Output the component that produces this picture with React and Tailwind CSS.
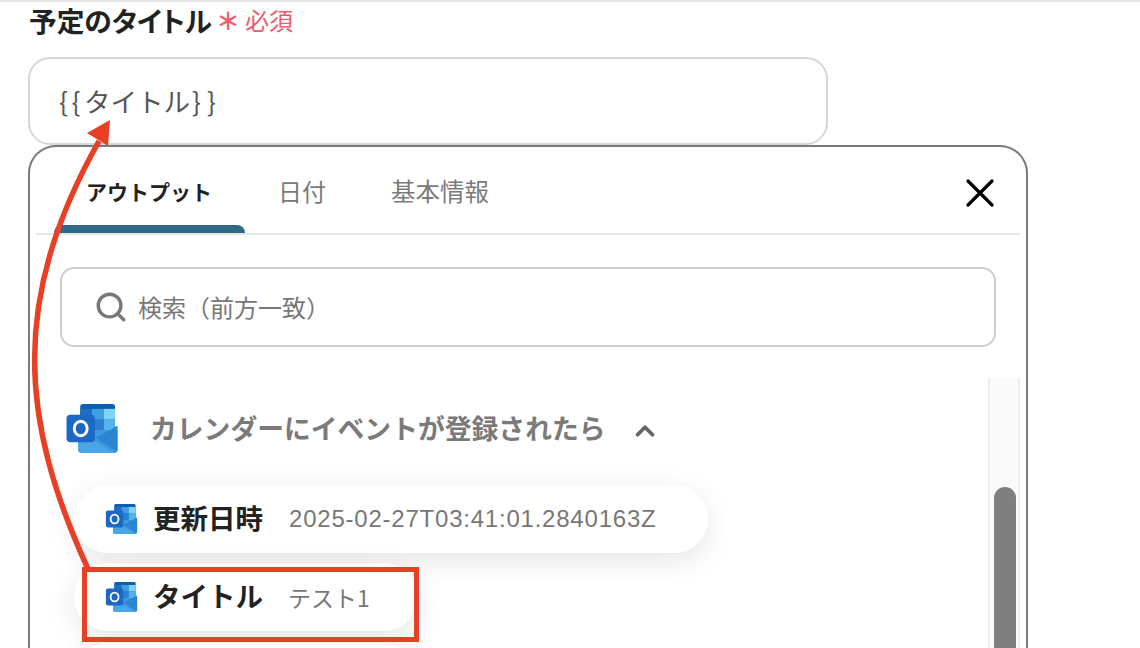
import { Search, ChevronUp, X } from 'lucide-react'

const jpFont = "font-['Noto_Sans_CJK_JP','Noto_Sans',sans-serif]"

function OutlookIcon({ className }) {
  return (
    <svg viewBox="0 0 52 50" className={className}>
      <path d="M14 2.5C14 1.1 15.1 0 16.5 0H47c1.4 0 2.5 1.1 2.5 2.5V26H14z" fill="#0f5fb0" />
      <rect x="14" y="5" width="12" height="11" fill="#1f6fc4" />
      <rect x="26" y="5" width="12" height="11" fill="#3f9fe3" />
      <rect x="38" y="5" width="11.5" height="11" fill="#7fd3f7" />
      <rect x="14" y="16" width="12" height="11" fill="#1a68bd" />
      <rect x="26" y="16" width="12" height="11" fill="#2c7fd3" />
      <rect x="38" y="16" width="11.5" height="11" fill="#52b4ea" />
      <rect x="26" y="27" width="12" height="11" fill="#1a68bd" />
      <path d="M12 26.5 L52 26.5 V47 C52 48.7 50.7 50 49 50 H15 C13.3 50 12 48.7 12 47 Z" fill="#3d97dd" />
      <path d="M30 35 L52 22 V47 C52 47.6 51.9 48 51.6 48.5 Z" fill="#2b85d0" />
      <path d="M12 28 L49.5 50 H15 C13.3 50 12 48.7 12 47 Z" fill="#4aa6e6" />
      <path d="M0 14.5C0 12.6 1.6 11 3.5 11H25.5C27.4 11 29 12.6 29 14.5V35.5C29 37.4 27.4 39 25.5 39H3.5C1.6 39 0 37.4 0 35.5Z" fill="#1c68c4" />
      <ellipse cx="14.5" cy="25" rx="6.6" ry="7.4" fill="none" stroke="#fff" strokeWidth="3" />
    </svg>
  )
}

function OutputPill({ width, label, value, valueClass }) {
  return (
    <div className={`flex h-[68px] ${width} shrink-0 items-center rounded-[34px] bg-white pl-[31px] shadow-[0_8px_30px_rgba(0,0,0,0.1)]`}>
      <OutlookIcon className="mr-[15px] h-[30px] w-[33px] shrink-0" />
      <span className="-mt-[2px] mr-[25px] text-[27.5px] font-bold text-[#222]">{label}</span>
      <span className={valueClass}>{value}</span>
    </div>
  )
}

export default function App() {
  return (
    <div className={`relative h-[648px] w-[1140px] overflow-hidden border-t-2 border-[#e5e5e5] bg-white ${jpFont}`}>
      {/* field label */}
      <div className="flex h-[36px] items-center pl-[29px] leading-[36px]">
        <span className="text-[27.7px] font-bold text-[#222]" style={{ fontFeatureSettings: '"palt"' }}>予定のタイトル</span>
        <span className="ml-[4px] text-[24px] font-bold text-[#ef5b6b]">＊</span>
        <span className="ml-[5px] text-[24px] text-[#ef5b6b]">必須</span>
      </div>

      {/* input */}
      <div className="ml-[28px] mt-[19px] flex h-[88px] w-[800px] items-center rounded-[22px] border-2 border-[#d3d8dc] pl-[29px] text-[26.5px] text-[#555]">
        <span className="tracking-[3.5px]">{'{{'}</span>
        <span>タイトル</span>
        <span className="ml-[2px] tracking-[6px]">{'}}'}</span>
      </div>

      {/* output picker */}
      <div className="ml-[28px] h-[561px] w-[1000px] rounded-t-[28px] border-2 border-b-0 border-[#7a7a7a] px-[6px]">
        <div className="relative flex h-[88px] items-center border-b-2 border-[#e6e6e6] pl-[50px]">
          <span className="mr-[66px] mt-[3px] text-[21px] font-bold text-[#222]">アウトプット</span>
          <span className="mr-[65px] mt-[1px] text-[24px] text-[#7a7a7a]">日付</span>
          <span className="mt-[2px] text-[24.5px] text-[#7a7a7a]">基本情報</span>
          <div className="absolute bottom-0 left-[18px] h-[8px] w-[191px] rounded-t-[8px] bg-[#2f6985]" />
          <X className="absolute right-[16px] top-[22px] h-[48px] w-[48px] text-black" strokeWidth={1.6} />
        </div>

        <div className="ml-[24px] mt-[32px] flex h-[80px] w-[936px] items-center rounded-[14px] border-2 border-[#cfcfcf] pl-[32px]">
          <Search className="mr-[10px] h-[34px] w-[34px] text-[#777]" strokeWidth={2.4} />
          <span className="text-[24px] text-[#777]">検索（前方一致）</span>
        </div>

        <div className="mt-[31px] flex">
          <div className="h-[300px] w-[953px] overflow-hidden">
            <div className="flex h-[101px] items-start pl-[30px] pt-[26px]">
              <OutlookIcon className="h-[49px] w-[52px] shrink-0" />
              <span className="ml-[32px] mt-[4px] text-[26.8px] font-bold text-[#7a7a7a]">カレンダーにイベントが登録されたら</span>
              <ChevronUp className="ml-[24px] mt-[12px] h-[30px] w-[30px] text-[#666]" strokeWidth={3} />
            </div>
            <div className="flex flex-col gap-[10px] pb-[40px] pl-[38px] pt-[6px]">
              <OutputPill width="w-[634px]" label="更新日時" value="2025-02-27T03:41:01.2840163Z" valueClass="ml-[1px] font-['Liberation_Sans',sans-serif] text-[24px] tracking-[0.78px] text-[#777]" />
              <OutputPill width="w-[344px]" label="タイトル" value="テスト1" valueClass="text-[23px] text-[#777]" />
              <OutputPill width="mt-[2px] w-[344px]" label="" value="" valueClass="" />
            </div>
          </div>
          <div className="flex h-[300px] w-[32px] justify-center border-x-2 border-[#ececec] bg-[#fafafa] pl-[2px] pt-[109px]">
            <div className="h-[300px] w-[22px] rounded-full bg-[#7f7f7f]" />
          </div>
        </div>
      </div>

      {/* annotation overlay */}
      <div className="absolute left-[82px] top-[565px] h-[75px] w-[337px] border-[5px] border-[#e94025]" />
      <svg className="absolute left-0 top-[-2px]" width="1140" height="648" viewBox="0 0 1140 648">
        <path d="M88 569 C 20 420, 10 300, 99 141" fill="none" stroke="#e94025" strokeWidth="5.5" />
        <polygon points="110,120 108,146 87,133" fill="#e94025" />
      </svg>
    </div>
  )
}
